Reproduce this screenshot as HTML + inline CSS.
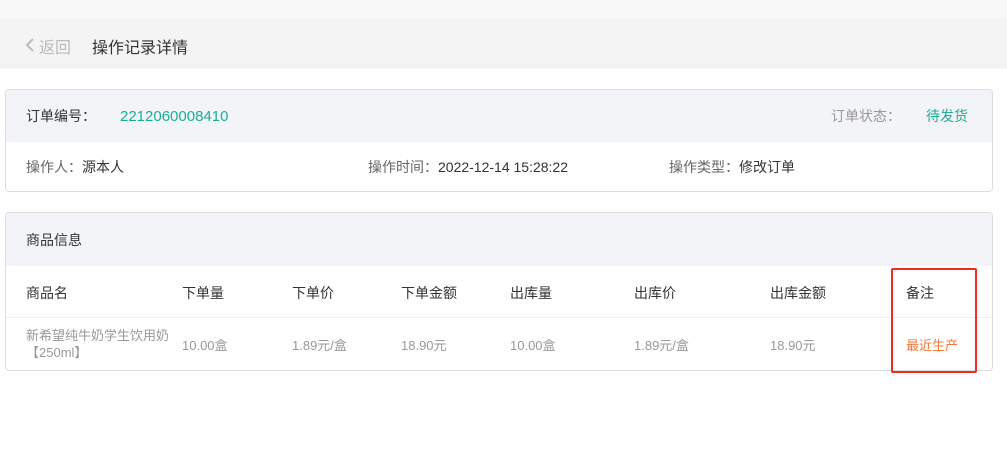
<!DOCTYPE html>
<html><head><meta charset="utf-8"><style>
*{margin:0;padding:0;box-sizing:border-box}
body{width:1007px;height:466px;background:#fff;font-family:"Liberation Sans","Noto Sans CJK SC",sans-serif;position:relative;overflow:hidden;color:#333}
.a{position:absolute;white-space:nowrap}
</style></head><body>
<div class="a" style="left:0;top:0;width:1007px;height:18px;background:#f8f8f8"></div>
<div class="a" style="left:0;top:18px;width:1007px;height:51px;background:#f4f4f5"></div>
<svg class="a" style="left:25px;top:37px" width="10" height="16"><path d="M8 2L2 8L8 14" stroke="#bbb" stroke-width="2" fill="none"/></svg>
<div class="a" style="left:39px;top:34px;font-size:16px;color:#bbb">返回</div>
<div class="a" style="left:92px;top:34px;font-size:16px;color:#333">操作记录详情</div>

<div class="a" style="left:5px;top:89px;width:988px;height:103px;border:1px solid #ddd;border-radius:4px;overflow:hidden">
 <div style="height:52px;background:#f3f4f8"></div>
</div>
<div class="a" style="left:26px;top:106px;font-size:14px;color:#333">订单编号：</div>
<div class="a" style="left:120px;top:108px;font-size:15px;color:#1aae96">2212060008410</div>
<div class="a" style="left:831px;top:106px;font-size:14px;color:#999">订单状态：</div>
<div class="a" style="left:926px;top:106px;font-size:14px;color:#1aae96">待发货</div>
<div class="a" style="left:26px;top:157px;font-size:14px;color:#666">操作人：<span style="color:#333">源本人</span></div>
<div class="a" style="left:368px;top:157px;font-size:14px;color:#666">操作时间：<span style="color:#333">2022-12-14 15:28:22</span></div>
<div class="a" style="left:669px;top:157px;font-size:14px;color:#666">操作类型：<span style="color:#333">修改订单</span></div>

<div class="a" style="left:5px;top:212px;width:988px;height:159px;border:1px solid #ddd;border-radius:4px;overflow:hidden">
 <div style="height:53px;background:#f3f4f8"></div>
 <div style="position:absolute;top:104px;left:0;right:0;border-top:1px solid #eee"></div>
</div>
<div class="a" style="left:26px;top:230px;font-size:14px;color:#333">商品信息</div>
<div class="a" style="top:283px;left:0;font-size:14px;color:#333">
<span class="a" style="left:26px">商品名</span><span class="a" style="left:182px">下单量</span><span class="a" style="left:292px">下单价</span><span class="a" style="left:401px">下单金额</span><span class="a" style="left:510px">出库量</span><span class="a" style="left:634px">出库价</span><span class="a" style="left:770px">出库金额</span><span class="a" style="left:906px">备注</span>
</div>
<div class="a" style="left:26px;top:327px;font-size:13px;color:#999;line-height:17px">新希望纯牛奶学生饮用奶<br>【250ml】</div>
<div class="a" style="top:335px;left:0;font-size:13px;color:#999">
<span class="a" style="left:182px">10.00盒</span><span class="a" style="left:292px">1.89元/盒</span><span class="a" style="left:401px">18.90元</span><span class="a" style="left:510px">10.00盒</span><span class="a" style="left:634px">1.89元/盒</span><span class="a" style="left:770px">18.90元</span><span class="a" style="left:906px;color:#f07a3a">最近生产</span>
</div>
<div class="a" style="left:891px;top:268px;width:86px;height:105px;border:2px solid #f52a22;border-radius:2px"></div>
</body></html>
